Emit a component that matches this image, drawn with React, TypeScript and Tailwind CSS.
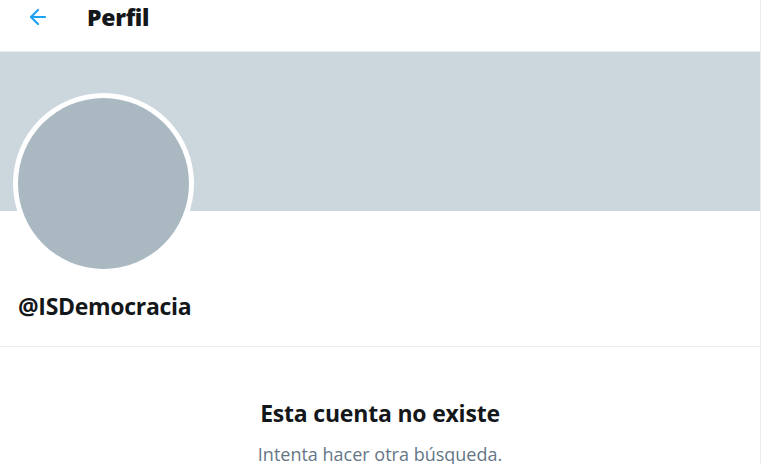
import { ArrowLeft } from "lucide-react"

const font = { fontFamily: '"Open Sans", "Noto Sans", "Liberation Sans", sans-serif' }

export default function App() {
  return (
    <div className="w-[768px] h-[464px] overflow-hidden bg-white" style={font}>
      <div className="w-[761px] h-full border-r border-[#e6ecf0]">
        {/* Header */}
        <div className="h-[52px] flex items-center border-b border-[#e6ecf0]">
          <div className="w-[76px] pl-[26px] flex items-center">
            <ArrowLeft className="w-[24px] h-[24px] text-[#1da1f2] -mt-[18px]" strokeWidth={2.2} />
          </div>
          <h1 className="ml-[11px] -mt-[17px] text-[23px] font-extrabold text-[#14171a] tracking-[-0.3px]">Perfil</h1>
        </div>

        {/* Banner + avatar */}
        <div className="h-[159px] bg-[#ccd6dd]" />
        <div className="h-[135px] px-[13px] flex flex-col">
          <div className="w-[181px] h-[181px] -mt-[118px] rounded-full bg-white p-[5px]">
            <div className="w-full h-full rounded-full bg-[#aab8c2]" />
          </div>
          <div className="mt-[16px] pl-[5px] text-[23px] font-bold text-[#14171a] tracking-[-0.3px] leading-[32px]">@ISDemocracia</div>
        </div>

        {/* Empty state */}
        <div className="border-t border-[#e6ecf0] flex flex-col items-center pt-[50px]">
          <h2 className="text-[23px] font-bold text-[#14171a] leading-[32px] tracking-[-0.2px]">Esta cuenta no existe</h2>
          <p className="mt-[13px] text-[18px] text-[#657786] leading-[24px]">Intenta hacer otra búsqueda.</p>
        </div>
      </div>
    </div>
  )
}
